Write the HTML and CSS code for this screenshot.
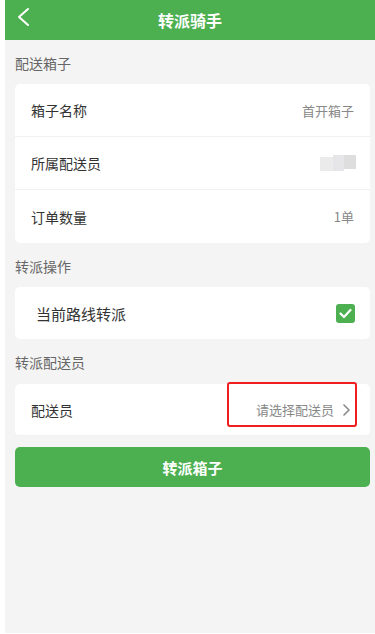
FILE: index.html
```html
<!DOCTYPE html>
<html lang="zh-CN">
<head>
<meta charset="utf-8">
<meta name="viewport" content="width=device-width, initial-scale=1">
<title>转派骑手</title>
<link rel="stylesheet" href="styles.css">
</head>
<body>
<div class="page">
  <header class="topbar">
    <span class="back">
      <svg width="14" height="20" viewBox="0 0 14 20"><polyline points="11,2 2,10 11,18" fill="none" stroke="#fff" stroke-width="2" stroke-linecap="round" stroke-linejoin="round"/></svg>
    </span>
    <h1 class="title">转派骑手</h1>
  </header>

  <div class="section-label">配送箱子</div>
  <div class="card">
    <div class="row">
      <span class="row-label">箱子名称</span>
      <span class="row-value">首开箱子</span>
    </div>
    <div class="row">
      <span class="row-label">所属配送员</span>
      <span class="blurred"><i class="b1"></i><i class="b2"></i><i class="b3"></i></span>
    </div>
    <div class="row">
      <span class="row-label">订单数量</span>
      <span class="row-value">1单</span>
    </div>
  </div>

  <div class="section-label">转派操作</div>
  <div class="card">
    <div class="row row-op">
      <span class="op-label">当前路线转派</span>
      <span class="checkbox">
        <svg width="13" height="11" viewBox="0 0 13 11"><polyline points="1.5,5.5 5,9 11.5,2" fill="none" stroke="#fff" stroke-width="2.2" stroke-linecap="round" stroke-linejoin="round"/></svg>
      </span>
    </div>
  </div>

  <div class="section-label section-label-tall">转派配送员</div>
  <div class="card card-select">
    <div class="row">
      <span class="row-label">配送员</span>
      <span class="select-value">请选择配送员
        <svg class="chev" width="7" height="12" viewBox="0 0 7 12"><polyline points="1,1 6,6 1,11" fill="none" stroke="#8a8a8a" stroke-width="1.6" stroke-linecap="round" stroke-linejoin="round"/></svg>
      </span>
    </div>
    <div class="highlight"></div>
  </div>

  <button class="submit">转派箱子</button>
</div>
</body>
</html>
```

FILE: styles.css
```css
html, body {
  margin: 0;
  padding: 0;
  background: #ffffff;
}
body {
  font-family: "Noto Sans CJK SC", "Noto Sans", sans-serif;
}
.page {
  margin-left: 5px;
  min-height: 633px;
  background: #f4f4f4;
  padding-bottom: 1px;
  box-sizing: border-box;
}
.topbar {
  height: 40px;
  background: #4caf50;
  display: flex;
  align-items: center;
  justify-content: center;
  position: relative;
}
.back {
  position: absolute;
  left: 12px;
  top: 7px;
  display: flex;
}
.title {
  margin: 0;
  font-size: 16px;
  font-weight: bold;
  color: #fff;
  line-height: 40px;
  letter-spacing: 0;
}
.section-label {
  height: 44px;
  line-height: 46px;
  padding-left: 10px;
  font-size: 14px;
  color: #666;
}
.section-label-tall {
  height: 45px;
}
.card {
  margin: 0 5px 0 10px;
  background: #fff;
  border-radius: 5px;
}
.row {
  height: 53px;
  display: flex;
  align-items: center;
  justify-content: space-between;
  padding: 0 16px;
  border-bottom: 1px solid #f1f1f1;
  box-sizing: border-box;
}
.row:last-child {
  border-bottom: none;
}
.row-label {
  font-size: 14px;
  color: #333;
}
.row-value {
  font-size: 13px;
  color: #888;
}
.blurred {
  display: flex;
  align-items: flex-start;
  height: 16px;
  margin-right: -2px;
}
.blurred i {
  display: block;
}
.b1 { width: 13px; height: 14px; margin-top: 2px; background: #ebebeb; }
.b2 { width: 11px; height: 16px; background: #e6e6e8; }
.b3 { width: 12px; height: 14px; background: #dedede; }
.row-op {
  height: 52px;
  padding: 0 15px 0 21px;
}
.op-label {
  font-size: 15px;
  color: #333;
}
.checkbox {
  width: 19px;
  height: 19px;
  border-radius: 3px;
  background: #4caf50;
  display: flex;
  align-items: center;
  justify-content: center;
}
.card-select {
  position: relative;
}
.card-select .row {
  height: 52px;
}
.select-value {
  font-size: 13px;
  color: #888;
  display: flex;
  align-items: center;
  gap: 9px;
  margin-right: 4px;
}
.highlight {
  position: absolute;
  left: 212px;
  top: -2px;
  width: 130px;
  height: 45px;
  border: 2px solid #f01e1e;
  border-radius: 3px;
  box-sizing: border-box;
}
.submit {
  display: block;
  margin: 11px 5px 0 10px;
  width: 355px;
  height: 40px;
  border: none;
  border-radius: 5px;
  background: #4caf50;
  color: #fff;
  font-family: "Noto Sans CJK SC", "Noto Sans", sans-serif;
  font-size: 15px;
  font-weight: bold;
}
```
